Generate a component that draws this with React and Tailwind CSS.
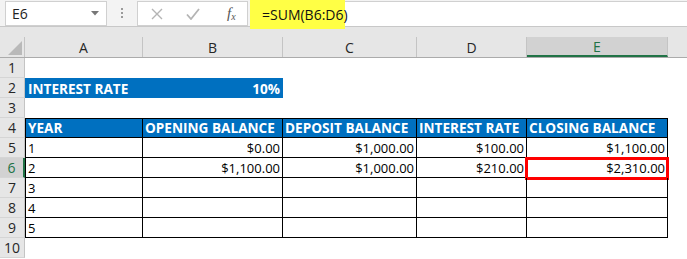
import React from 'react';

const W = ['w-[118px]', 'w-[140px]', 'w-[134px]', 'w-[110px]', 'w-[141px]'];
const LETTERS = ['A', 'B', 'C', 'D', 'E'];

const HEAD = ['YEAR', 'OPENING BALANCE', 'DEPOSIT BALANCE', 'INTEREST RATE', 'CLOSING BALANCE'];
const DATA = {
    5: ['1', '$0.00', '$1,000.00', '$100.00', '$1,100.00'],
    6: ['2', '$1,100.00', '$1,000.00', '$210.00', '$2,310.00'],
    7: ['3', '', '', '', ''],
    8: ['4', '', '', '', ''],
    9: ['5', '', '', '', ''],
};

const RowHead = ({ n, active }) => (
    <div
        className={`w-[25px] h-full shrink-0 flex items-end justify-center pb-[2px] border-b border-[#d5d5d5] ${
            active
                ? 'bg-[#d2d2d2] text-[#217346] border-r-2 border-r-[#217346]'
                : 'bg-[#e6e6e6] text-[#262626] border-r border-r-[#c4c4c4]'
        }`}
    >
        <span className="leading-none">{n}</span>
    </div>
);

const App = () => {
    return (
        <div className="w-[687px] h-[259px] overflow-hidden bg-white text-[13px] text-black font-['Open_Sans',sans-serif]">
            {/* Formula bar */}
            <div className="h-[27px] flex bg-[#f3f3f3] border-b border-[#c8c8c8]">
                <div className="ml-[5px] mt-[1px] w-[102px] h-[25px] bg-white border border-[#d0d0d0] flex items-center pl-[6px] pr-[7px] justify-between">
                    <span className="text-[14px] text-[#222]">E6</span>
                    <svg width="8" height="5" viewBox="0 0 8 5"><path d="M0 0 L8 0 L4 4.5 Z" fill="#777" /></svg>
                </div>
                <div className="w-[30px] flex flex-col items-center justify-center gap-[2px]">
                    <span className="w-[2px] h-[2px] bg-[#9a9a9a]" />
                    <span className="w-[2px] h-[2px] bg-[#9a9a9a]" />
                    <span className="w-[2px] h-[2px] bg-[#9a9a9a]" />
                </div>
                <div className="mt-[1px] w-[111px] h-[25px] bg-white border border-[#d0d0d0] flex items-center">
                    <svg className="ml-[13px]" width="12" height="12" viewBox="0 0 12 12">
                        <path d="M1 1 L11 11 M11 1 L1 11" stroke="#b4b4b4" strokeWidth="1.4" fill="none" />
                    </svg>
                    <svg className="ml-[23px]" width="14" height="12" viewBox="0 0 14 12">
                        <path d="M1 6.5 L5 11 L13 1" stroke="#b4b4b4" strokeWidth="1.8" fill="none" />
                    </svg>
                    <span className="ml-[27px] italic text-[15px] text-[#555] font-['Liberation_Serif',serif] leading-none">
                        f<span className="text-[10px] relative top-[2px]">x</span>
                    </span>
                </div>
                <div className="ml-[2px] mt-[1px] flex-1 h-[25px] bg-white border-t border-[#d0d0d0] relative">
                    <div className="absolute left-0 -top-[2px] w-[95px] h-[29px] bg-[#ffff45] flex items-center pl-[12px] text-[14px] text-[#111]">
                        =SUM(B6:D6)
                    </div>
                </div>
            </div>

            {/* Column headers */}
            <div className="pt-[10px] bg-[#e6e6e6] border-b border-[#ababab]">
                <div className="flex h-[20px] text-[14px] text-[#262626]">
                    <div className="w-[25px] shrink-0 border-r border-[#c4c4c4] flex items-end justify-end pr-[2px] pb-[2px]">
                        <svg width="14" height="14" viewBox="0 0 14 14"><path d="M14 0 L14 14 L0 14 Z" fill="#b9b9b9" /></svg>
                    </div>
                    {LETTERS.map((l, i) =>
                        i === 4 ? (
                            <div key={l} className={`${W[i]} shrink-0 bg-[#d2d2d2] border-b-2 border-[#217346] border-r border-r-[#c4c4c4] flex items-center justify-center text-[#217346]`}>
                                {l}
                            </div>
                        ) : (
                            <div key={l} className={`${W[i]} shrink-0 border-r border-[#c4c4c4] flex items-center justify-center`}>
                                {l}
                            </div>
                        )
                    )}
                    <div className="flex-1" />
                </div>
            </div>

            {/* Rows */}
            <div className="text-[14px]">
                <div className="flex h-[20px]"><RowHead n={1} /></div>
                <div className="flex h-[20px]">
                    <RowHead n={2} />
                    <div className="w-[258px] h-full bg-[#0070c0] text-white font-bold text-[13.6px] leading-[18px] flex items-end justify-between px-[3px]">
                        <span>INTEREST RATE</span>
                        <span>10%</span>
                    </div>
                </div>
                <div className="flex h-[20px]"><RowHead n={3} /></div>
                <div className="flex h-[20px]">
                    <RowHead n={4} />
                    {HEAD.map((h, i) => (
                        <div
                            key={h}
                            className={`${W[i]} shrink-0 h-full bg-[#0070c0] text-white font-bold text-[13.6px] leading-[18px] border-t border-r border-b border-black ${i === 0 ? 'border-l' : ''} flex items-end px-[2px] whitespace-nowrap overflow-hidden`}
                        >
                            {h}
                        </div>
                    ))}
                </div>
                {[5, 6, 7, 8, 9].map((r) => (
                    <div key={r} className="flex h-[20px]">
                        <RowHead n={r} active={r === 6} />
                        {DATA[r].map((v, i) => (
                            <div
                                key={i}
                                className={`${W[i]} shrink-0 h-full border-r border-b border-black ${i === 0 ? 'border-l' : ''} ${
                                    i === 0 ? 'justify-start' : 'justify-end'
                                } flex items-end px-[2px] text-[13px] leading-[18px] relative`}
                            >
                                {v}
                                {r === 6 && i === 4 && (
                                    <div className="absolute -left-[2px] -right-[2px] -top-[1px] -bottom-[3px] border-[3px] border-[#ff0000]" />
                                )}
                            </div>
                        ))}
                    </div>
                ))}
                <div className="flex h-[20px]"><RowHead n={10} /></div>
            </div>
        </div>
    );
};

export default App;
